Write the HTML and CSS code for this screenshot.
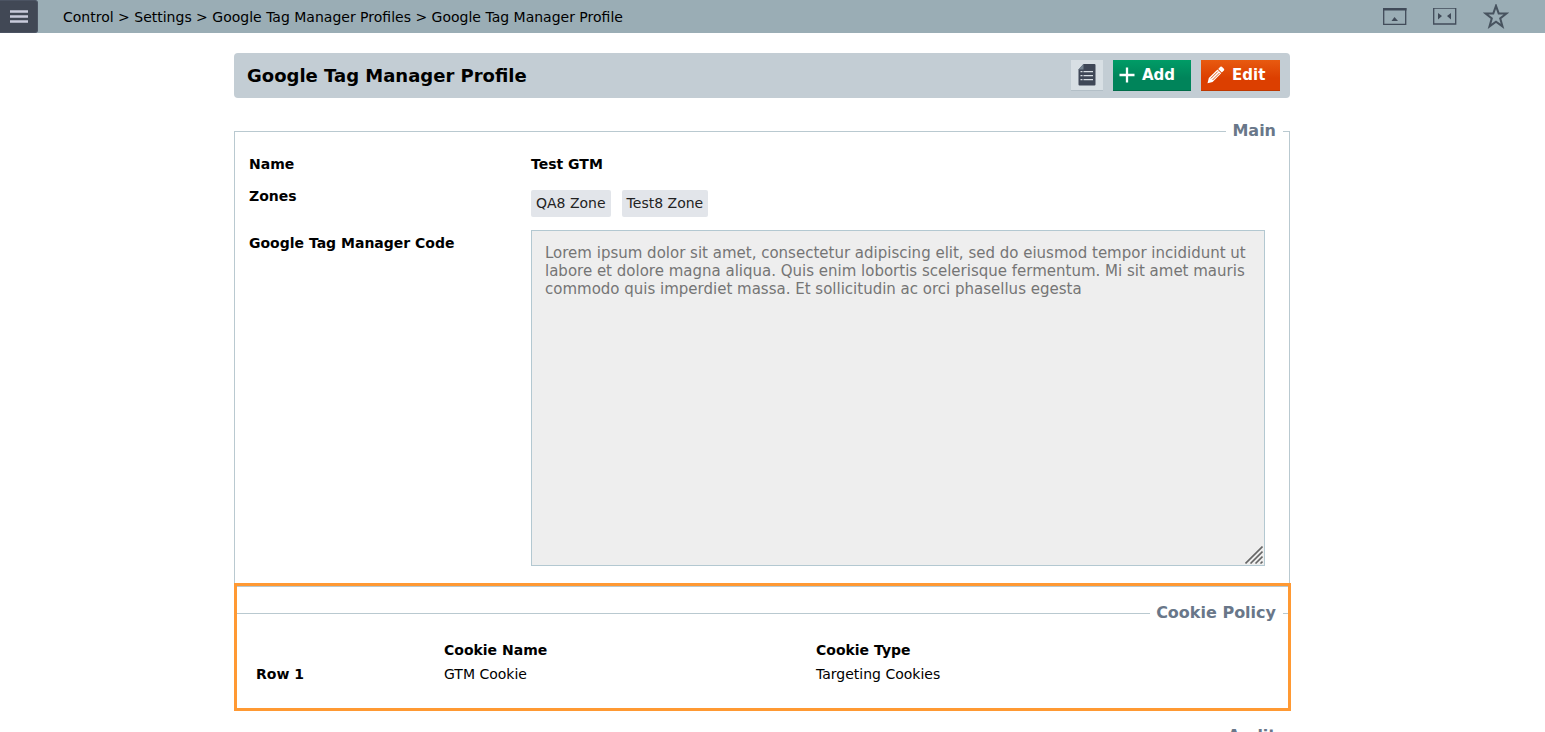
FILE: index.html
```html
<!DOCTYPE html>
<html lang="en">
<head>
<meta charset="utf-8">
<title>Google Tag Manager Profile</title>
<link rel="stylesheet" href="styles.css">
</head>
<body>
<header class="topbar">
  <button class="menu-button" type="button" aria-label="Menu">
    <svg width="18" height="13" viewBox="0 0 18 13"><path d="M0 1.5h18M0 6.5h18M0 11.5h18" stroke="#c9cbdc" stroke-width="2.6"/></svg>
  </button>
  <nav class="breadcrumb" aria-label="Breadcrumb">
    <a href="#">Control</a> &gt; <a href="#">Settings</a> &gt; <a href="#">Google Tag Manager Profiles</a> &gt; <a href="#">Google Tag Manager Profile</a>
  </nav>
  <div class="tools">
    <button type="button" aria-label="Collapse header">
      <svg width="24" height="18" viewBox="0 0 24 18"><path d="M.7 .7h22v15.600H.7z" fill="none" stroke="#414b59" stroke-width="1.300"/><path d="M0 0h23.500v2.500H0z" fill="#414b59"/><path d="M8.500 13l3-4 3.500 4z" fill="#414b59"/></svg>
    </button>
    <button type="button" aria-label="Toggle width">
      <svg width="24" height="18" viewBox="0 0 24 18"><path d="M.7 .2h22v15.800H.7z" fill="none" stroke="#414b59" stroke-width="1.300"/><path d="M5 5l4 3-4 3.500zM18 5l-4 3 4 3.500z" fill="#414b59"/></svg>
    </button>
    <button type="button" aria-label="Add to favourites">
      <svg width="26" height="26" viewBox="0 0 26 26"><path d="M13 1.800l2.700 7.600 7.800.1-6.300 4.900 2.300 8L13 17.700l-6.500 4.700 2.300-8L2.500 9.500l7.800-.1z" fill="none" stroke="#47535f" stroke-width="2"/></svg>
    </button>
  </div>
</header>
<main class="content">
  <div class="titlebar">
    <h1>Google Tag Manager Profile</h1>
    <button class="btn btn-log" type="button" aria-label="Details">
      <svg width="18" height="22" viewBox="0 0 18 22"><path d="M5.500 0H16.500q1 0 1 1v19.500q0 1-1 1H1.500q-1 0-1-1V5.500z" fill="#3f4757"/><path d="M.5 5.500L5.500 0v5.500z" fill="#73818f"/><path d="M2.500 7.700h2M2.500 11.700h2M2.500 15.700h2M5.500 7.700h9.500M5.500 11.700h9.500M5.500 15.700h9.500" stroke="#d8dee4" stroke-width="1.300"/></svg>
    </button>
    <button class="btn btn-add" type="button">
      <svg width="16" height="16" viewBox="0 0 16 16"><path d="M8 .5v15M.5 8h15" stroke="#fff" stroke-width="2.300"/></svg>
      Add
    </button>
    <button class="btn btn-edit" type="button">
      <svg width="18" height="18" viewBox="0 0 18 18"><path d="M.5 17.300l1.300-5.200L10.500 3.600 14.200 7.300 5.600 15.900z" fill="#fff"/><path d="M11.200 2.900L13.300.8q.8-.7 1.600 0l2 2q.8.9 0 1.700l-2.100 2.100z" fill="#fff"/><path d="M3.800 12.500l7-7M5.500 14l7-7" stroke="#df4700" stroke-width=".9"/></svg>
      Edit
    </button>
  </div>

  <fieldset class="panel main-panel">
    <legend>Main</legend>
    <div class="fields">
      <div class="label">Name</div>
      <div class="name-value">Test GTM</div>
      <div class="label">Zones</div>
      <div class="tags"><span class="tag">QA8 Zone</span><span class="tag">Test8 Zone</span></div>
      <label class="label code-label" for="code">Google Tag Manager Code</label>
      <div class="code-box">
        <textarea id="code" readonly>Lorem ipsum dolor sit amet, consectetur adipiscing elit, sed do eiusmod tempor incididunt ut labore et dolore magna aliqua. Quis enim lobortis scelerisque fermentum. Mi sit amet mauris commodo quis imperdiet massa. Et sollicitudin ac orci phasellus egesta</textarea>
        <svg class="grip" width="18" height="18" viewBox="0 0 18 18"><path d="M.5 17.500l17-17M5.500 17.500L17.500 5.500M10.500 17.500l7-7M15.500 17.500l2-2" stroke="#666" stroke-width="1.600"/></svg>
      </div>
    </div>
  </fieldset>

  <section class="highlighted">
    <fieldset class="panel cookie-panel">
      <legend>Cookie Policy</legend>
      <table>
        <colgroup><col class="col-row"><col class="col-name"><col></colgroup>
        <thead><tr><td></td><th scope="col">Cookie Name</th><th scope="col">Cookie Type</th></tr></thead>
        <tbody><tr><th scope="row">Row 1</th><td>GTM Cookie</td><td>Targeting Cookies</td></tr></tbody>
      </table>
    </fieldset>
    <div class="highlight"></div>
  </section>

  <fieldset class="panel audit-panel">
    <legend>Audit</legend>
  </fieldset>
</main>
</body>
</html>
```
FILE: styles.css
```css
* { box-sizing: border-box; }

body {
  margin: 0;
  height: 100vh;
  display: flex;
  flex-direction: column;
  background: #fff;
  color: #000;
  font: 14px/20px Verdana, "DejaVu Sans", sans-serif;
}

button { font: inherit; border: 0; padding: 0; cursor: pointer; }
svg { display: block; flex: none; }

.topbar {
  flex: none;
  height: 33px;
  display: flex;
  align-items: center;
  background: #9aadb5;
}
.menu-button {
  width: 38px;
  height: 33px;
  display: grid;
  place-items: center;
  background: #414855;
  border: 1px solid #4b5362;
  border-left: 0;
  border-radius: 0 3px 3px 0;
}
.breadcrumb { flex: 1; padding-left: 25px; }
.breadcrumb a { color: inherit; text-decoration: none; }
.tools {
  display: flex;
  align-items: center;
  gap: 26px;
  padding-right: 36px;
}
.tools button { background: none; }

.content {
  flex: 1;
  min-height: 0;
  overflow-y: auto;
  scrollbar-width: none;
  padding: 20px 255px 20px 234px;
}

.titlebar {
  height: 45px;
  display: flex;
  align-items: center;
  gap: 10px;
  padding: 0 10px 0 13px;
  background: #c3cdd4;
  border-radius: 4px;
}
h1 { flex: 1; margin: 0; font-size: 18px; line-height: 24px; }

.btn {
  height: 31px;
  display: flex;
  align-items: center;
  color: #fff;
  font-size: 15px;
  font-weight: bold;
}
.btn-log {
  width: 32px;
  justify-content: center;
  background: #d8dfe4;
  border-bottom: 1px solid #b3bfc7;
}
.btn-add {
  width: 78px;
  gap: 7px;
  padding-left: 6px;
  background: linear-gradient(#009c66, #00845a 60%);
  border-bottom: 1px solid #006c49;
}
.btn-edit {
  width: 79px;
  gap: 7px;
  padding-left: 6px;
  background: linear-gradient(#e85a10, #dc3f00 60%);
  border-bottom: 1px solid #bd3700;
}

.panel {
  min-width: 0;
  margin: 0;
  border: 1px solid #b9c9d0;
  padding: 0 6px;
}
.panel legend {
  margin-left: auto;
  padding: 0 7px 2px 6px;
  color: #697789;
  font-size: 16px;
  line-height: 17px;
  font-weight: bold;
}
.main-panel { margin-top: 24px; }

.fields {
  display: grid;
  grid-template-columns: 282px minmax(0, 1fr);
  padding: 13px 18px 20px 8px;
}
.label { font-weight: bold; }
.name-value { font-weight: bold; padding-bottom: 12px; }
.tags { display: flex; gap: 11px; padding: 4px 0 13px; }
.tag {
  padding: 3px 5px 4px;
  background: #e2e5ea;
  border-radius: 2px;
  color: #222;
}
.code-label { padding-top: 3px; }
.code-box { position: relative; }
textarea {
  display: block;
  width: 100%;
  height: 336px;
  padding: 13px;
  border: 1px solid #b3c8d1;
  border-radius: 0;
  background: #eee;
  color: #757575;
  font: 15px/18px Verdana, "DejaVu Sans", sans-serif;
  resize: none;
}
.grip { position: absolute; right: 2px; bottom: 2px; }

.highlighted { position: relative; margin-top: 17px; }
.highlight {
  position: absolute;
  inset: -21px -1px -1px 0;
  border: 3px solid #ff9933;
  pointer-events: none;
}
.cookie-panel { padding-bottom: 23px; }
table {
  width: 100%;
  margin-top: 15px;
  border-collapse: collapse;
  table-layout: fixed;
}
th, td { height: 24px; padding: 0; text-align: left; }
th[scope="row"] { padding-left: 15px; }
.col-row { width: 203px; }
.col-name { width: 372px; }
.audit-panel { margin-top: 17px; min-height: 100px; }
```
